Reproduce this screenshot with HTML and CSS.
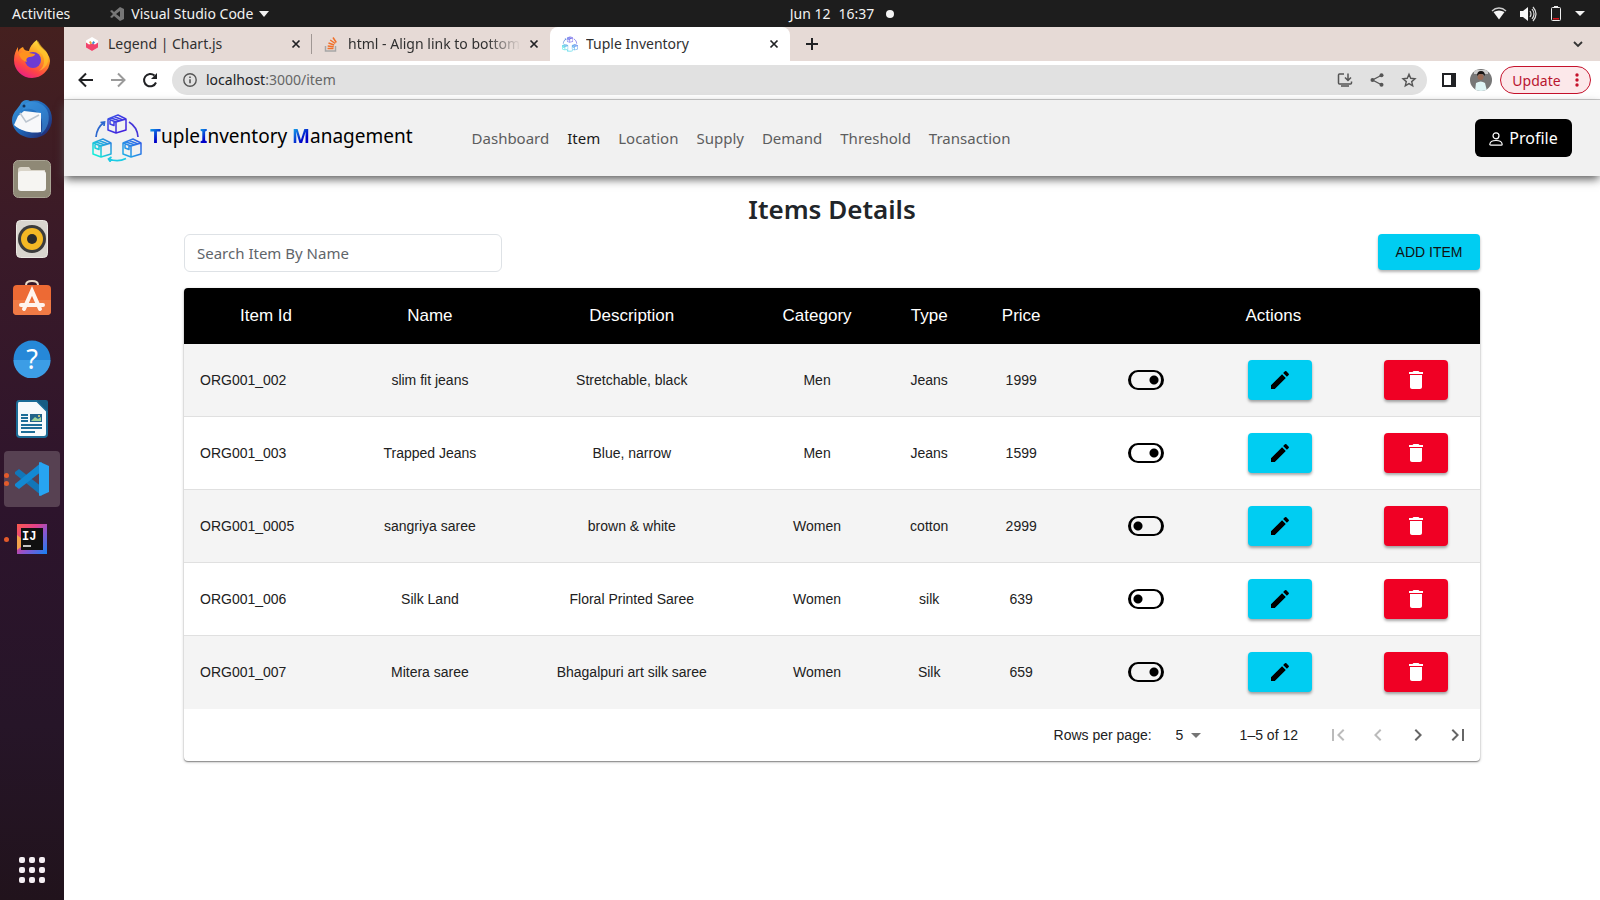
FILE: index.html
```html
<!DOCTYPE html>
<html lang="en">
<head>
<meta charset="utf-8">
<title>Tuple Inventory</title>
<link rel="stylesheet" href="styles.css">
</head>
<body>
<svg class="defs" aria-hidden="true">
  <defs>
    <linearGradient id="boxTop" x1="0" y1="0" x2="1" y2="1"><stop offset="0" stop-color="#3a55e8"/><stop offset="1" stop-color="#4318dc"/></linearGradient>
    <linearGradient id="boxLeft" x1="0" y1="1" x2="1" y2="0"><stop offset="0" stop-color="#0ffbd8"/><stop offset="1" stop-color="#2e78e0"/></linearGradient>
    <linearGradient id="boxRight" x1="0" y1="1" x2="1" y2="0"><stop offset="0" stop-color="#1fb4e6"/><stop offset="1" stop-color="#3357e6"/></linearGradient>
    <linearGradient id="ffA" x1=".8" y1="0" x2=".3" y2="1"><stop offset="0" stop-color="#fff14a"/><stop offset=".4" stop-color="#ff9a1f"/><stop offset=".75" stop-color="#ff4545"/><stop offset="1" stop-color="#e91e86"/></linearGradient>
    <linearGradient id="tbA" x1="0" y1="0" x2="1" y2="1"><stop offset="0" stop-color="#3d9be0"/><stop offset=".5" stop-color="#1f67b8"/><stop offset="1" stop-color="#231c63"/></linearGradient>
    <linearGradient id="ijA" x1="0" y1="0" x2="1" y2="1"><stop offset="0" stop-color="#fb5a4a"/><stop offset=".35" stop-color="#e2408c"/><stop offset=".6" stop-color="#8a55d0"/><stop offset="1" stop-color="#1383f5"/></linearGradient>
    <symbol id="pen" viewBox="0 0 24 24"><path d="M3 17.25V21h3.75L17.81 9.94l-3.75-3.75zM20.71 7.04c.39-.39.39-1.02 0-1.41l-2.34-2.34a.996.996 0 0 0-1.41 0l-1.83 1.83 3.75 3.75z"/></symbol>
    <symbol id="bin" viewBox="0 0 24 24"><path d="M6 19c0 1.100.9 2 2 2h8c1.100 0 2-.9 2-2V7H6zM19 4h-3.500l-1-1h-5l-1 1H5v2h14z"/></symbol>
    <symbol id="close" viewBox="0 0 10 10"><path d="M1.500 1.500l7 7M8.500 1.500l-7 7" fill="none" stroke="#202124" stroke-width="1.700"/></symbol>
    <symbol id="cube" viewBox="0 0 20 20"><path d="M1 5l8 3v11l-8-3zM9 8l10-3v11L9 19M1 5l10-4 8 4M4 4l9 3M7 2.500l9 3.500M3 6v4l4 1.500v-4" fill="none" stroke-width="1.500" stroke-linejoin="round"/></symbol>
    <symbol id="logo" viewBox="0 0 50 48">
      <use href="#cube" x="15" y="0" width="20" height="20" stroke="url(#boxTop)"/>
      <use href="#cube" x="0" y="24" width="20" height="20" stroke="url(#boxLeft)"/>
      <use href="#cube" x="30" y="24" width="20" height="20" stroke="url(#boxRight)"/>
      <g fill="none" stroke-width="1.700"><path d="M4 23C4.500 17 7 12 12 8.500M8.500 8.500l4-.5-.5 4" stroke="#2c68cf"/><path d="M37 8c5 3 8.500 8 9 15" stroke="#4536d8"/><path d="M34 44.500c-5 2.500-11 3-17 .5M19.500 43l-3 2 2 3" stroke="#1bcbe4"/></g>
    </symbol>
    <symbol id="vs" viewBox="0 0 36 36"><path d="M1 11l4-3 23 18v9L1 13z" fill="#1276b8"/><path d="M1 25l4 3 23-18V1L1 23z" fill="#1389d2"/><path d="M26 1l9 4v26l-9 4c-1 0-1-1-1-1V2s0-1 1-1z" fill="#27a4f2"/></symbol>
  </defs>
</svg>

<header class="topbar">
  <div class="topbar-left">
    <span class="activities">Activities</span>
    <svg width="15" height="14" viewBox="0 0 15 14"><path d="M10 0l4 2v10l-4 2-6-5-2 2-2-1 3-3-3-3 2-1 2 2zM10 4L6 7l4 3z" fill="#777"/></svg>
    <span>Visual Studio Code</span>
    <svg width="10" height="6" viewBox="0 0 10 6"><path d="M0 0h10L5 6z" fill="#f2f2f2"/></svg>
  </div>
  <div class="clock"><span>Jun 12</span><span>16:37</span><i class="clock-dot"></i></div>
  <div class="topbar-right">
    <svg width="16" height="13" viewBox="0 0 16 13"><path d="M1 4C5 0 11 0 15 4" fill="none" stroke="#ccc" stroke-width="1.300"/><path d="M2.500 5C6 3 10 3 13.500 5L8 12.500z" fill="#f5f5f5"/></svg>
    <svg width="17" height="16" viewBox="0 0 17 16"><path d="M0 5h3l5-4v14l-5-4H0z" fill="#f5f5f5"/><path d="M10 5q2 3 0 6M12 3q4 5 0 10M13 1q6 7 0 14" fill="none" stroke="#ddd" stroke-width="1.200"/></svg>
    <svg width="12" height="16" viewBox="0 0 12 16"><path d="M4 0h4v2H4z" fill="#eee"/><rect x="1.500" y="1.500" width="9" height="13" rx="1" fill="none" stroke="#eee"/><path d="M3 12h6v1.500H3z" fill="#d4141b"/></svg>
    <svg width="10" height="5" viewBox="0 0 10 5"><path d="M0 0h10L5 5z" fill="#f2f2f2"/></svg>
  </div>
</header>

<div class="desktop">
  <aside class="dock">
    <button class="dock-item" aria-label="Firefox"><svg width="38" height="40" viewBox="0 0 38 40"><path d="M19 39A18 18 0 0 1 1 21C1 15 3 11 5 8v5c1-3 3-4 5-5 1 3 3 4 6 4 1-5 5-9 8-11 1 4 3 6 6 9 4 3 7 8 7 12a18 18 0 0 1-18 17z" fill="url(#ffA)"/><circle cx="20" cy="21" r="8" fill="#6e3bd2"/><path d="M6 15c3-3 7-2 10-1l6 1c0 2-3 3-6 3-3 1-3 3-2 5-4-1-7-4-8-8z" fill="#ff921e"/><path d="M25 12c8 4 8 15 1 20 9-3 12-13 7-20-3-3-6-6-8-10-2 4-2 7 0 10z" fill="#ffc62c" opacity=".65"/></svg></button>
    <button class="dock-item" aria-label="Thunderbird"><svg width="40" height="40" viewBox="0 0 40 40"><path d="M8 6C10 1 15 0 18 2c12-3 22 6 22 18 0 11-8 19-19 19C9 39 0 31 0 21c0-4 2-8 5-11z" fill="url(#tbA)"/><path d="M14 4c8-3 17 0 21 7 4 8 1 19-6 24 2-8 2-16-3-21-5-5-11-5-16-3z" fill="#3c95df" opacity=".6"/><path d="M6 17l6-5 17 2v19c-10 2-20-1-27-7z" fill="#f7f8fa"/><path d="M8 14l6 9 13-7" fill="none" stroke="#bcc5cf" stroke-width="1.500"/><circle cx="12" cy="7" r="1.500" fill="#12335c"/></svg></button>
    <button class="dock-item" aria-label="Files"><svg width="38" height="38" viewBox="0 0 38 38"><rect x=".5" y=".5" width="37" height="37" rx="5" fill="#8f8976" stroke="#aaa595"/><path d="M5 10q0-3 3-3h8l2 3h14v5H5z" fill="#d9d4c8"/><rect x="5" y="11" width="28" height="20" rx="3" fill="#f6f5f2"/></svg></button>
    <button class="dock-item" aria-label="Rhythmbox"><svg width="32" height="38" viewBox="0 0 32 38"><rect x=".5" y=".5" width="31" height="37" rx="4" fill="#d9d5ce" stroke="#ebe8e3"/><circle cx="16" cy="19" r="14" fill="#3c3c3c"/><circle cx="16" cy="19" r="11" fill="#f4b824"/><circle cx="16" cy="19" r="5" fill="#2b2b2b"/></svg></button>
    <button class="dock-item" aria-label="Software"><svg width="38" height="40" viewBox="0 0 38 40"><path d="M13 8V6q0-4 6-4t6 4v2" fill="none" stroke="#eadcc9" stroke-width="2"/><rect x="0" y="6" width="38" height="30" rx="4" fill="#ed6a34"/><path d="M0 21h38v11q0 4-4 4H4q-4 0-4-4z" fill="#f07a45"/><path d="M11 30l8-18 8 18M8 26h22" fill="none" stroke="#fff5ef" stroke-width="4" stroke-linecap="round"/></svg></button>
    <button class="dock-item" aria-label="Help"><svg width="38" height="38" viewBox="0 0 38 38"><circle cx="19" cy="19" r="18.500" fill="#2688d8"/><path d="M.5 20h37a18.500 18.500 0 0 1-37 0z" fill="#3c9de6"/><text x="19" y="29" class="help-mark">?</text></svg></button>
    <button class="dock-item" aria-label="Writer"><svg width="32" height="38" viewBox="0 0 32 38"><path d="M3 1h18l10 10v23q0 3-3 3H4q-3 0-3-3V4q0-3 2-3z" fill="#f7fafc" stroke="#1b6c97" stroke-width="2"/><path d="M21 0h9q2 0 2 2v9z" fill="#185d84"/><path d="M5 15h7M5 18h7M5 21h7M5 25h21M5 28h21M5 32h14" stroke="#1e6e98" stroke-width="1.800"/><rect x="14" y="14" width="12" height="8" fill="#22648a"/><path d="M15 21l4-4 3 2 3-2v4z" fill="#9ed39a"/><circle cx="23" cy="16" r="1" fill="#f4dc7c"/></svg></button>
    <button class="dock-item dock-active" aria-label="Visual Studio Code"><span class="pips"><i></i><i></i></span><svg width="36" height="36"><use href="#vs"/></svg></button>
    <button class="dock-item" aria-label="IntelliJ IDEA"><span class="pips"><i></i></span><svg width="30" height="30" viewBox="0 0 30 30"><rect width="30" height="30" fill="url(#ijA)"/><path d="M0 11l4 3v9l-4 3z" fill="#f3a24c"/><rect x="4" y="4" width="22" height="22" fill="#101010"/><text x="5" y="16" class="ij-mark">IJ</text><path d="M6 22h8" stroke="#fff" stroke-width="1.500"/></svg></button>
    <button class="dock-item dock-apps" aria-label="Show applications"><svg width="26" height="26" viewBox="0 0 26 26" fill="#f4eef2"><g id="dots"><rect width="6" height="6" rx="2"/><rect x="10" width="6" height="6" rx="2"/><rect x="20" width="6" height="6" rx="2"/></g><use href="#dots" y="10"/><use href="#dots" y="20"/></svg></button>
  </aside>

  <div class="browser">
    <div class="tabs">
      <div class="tab"><svg width="16" height="16" viewBox="0 0 16 16"><path d="M8 1l6 3.500v7L8 15l-6-3.500v-7z" fill="#fff"/><path d="M2 6.500l3 2 3-1 3 1 3-2v5L8 15l-6-3.500z" fill="#f2446c"/><path d="M5 6l1.500-1L8 7 6.500 8.500z" fill="#e7a53a"/><path d="M8 7l1.500-2L11 6.500 9 8.500z" fill="#3a8ccf"/></svg><span class="tab-title">Legend | Chart.js</span><button class="tab-close" aria-label="Close tab"><svg width="10" height="10"><use href="#close"/></svg></button></div>
      <div class="tab tab-split"><svg width="16" height="16" viewBox="0 0 16 16" fill="none"><path d="M1.500 10v5h10v-5" stroke="#a6a6a6" stroke-width="1.500"/><path d="M3.500 12.500h6M3.700 10l6 .8M4.500 7l5.700 2M6.200 4l5 3.500M9 1.500l3.300 5" stroke="#f0702a" stroke-width="1.500"/></svg><span class="tab-title tab-fade">html - Align link to bottom</span><button class="tab-close" aria-label="Close tab"><svg width="10" height="10"><use href="#close"/></svg></button></div>
      <div class="tab tab-current"><svg width="16" height="16"><use href="#logo"/></svg><span class="tab-title">Tuple Inventory</span><button class="tab-close" aria-label="Close tab"><svg width="10" height="10"><use href="#close"/></svg></button></div>
      <button class="tab-new" aria-label="New tab"><svg width="12" height="12" viewBox="0 0 12 12"><path d="M6 0v12M0 6h12" stroke="#202124" stroke-width="2"/></svg></button>
      <button class="tab-list" aria-label="Search tabs"><svg width="10" height="7" viewBox="0 0 10 7"><path d="M1 1l4 4 4-4" fill="none" stroke="#333" stroke-width="1.800"/></svg></button>
    </div>

    <div class="toolbar">
      <button class="tool" aria-label="Back"><svg width="16" height="16" viewBox="0 0 16 16"><path d="M15 8H2M8 1.500L1.500 8 8 14.500" fill="none" stroke="#202124" stroke-width="2"/></svg></button>
      <button class="tool" aria-label="Forward"><svg width="16" height="16" viewBox="0 0 16 16"><path d="M1 8h13M8 1.500L14.500 8 8 14.500" fill="none" stroke="#9a9a9a" stroke-width="2"/></svg></button>
      <button class="tool" aria-label="Reload"><svg width="16" height="16" viewBox="0 0 16 16"><path d="M14 10.500A6.200 6.200 0 1 1 12.500 3.600" fill="none" stroke="#202124" stroke-width="2"/><path d="M15 1v6H9z" fill="#202124"/></svg></button>
      <div class="omnibox">
        <svg width="14" height="14" viewBox="0 0 14 14"><circle cx="7" cy="7" r="6.200" fill="none" stroke="#555" stroke-width="1.400"/><path d="M7 6.200v4M7 3.400v1.500" stroke="#555" stroke-width="1.600"/></svg>
        <a class="url" href="#"><b>localhost</b>:3000/item</a>
        <svg width="16" height="16" viewBox="0 0 16 16"><path d="M7 2H2.500q-1 0-1 1v8q0 1 1 1h11q1 0 1-1V9.500M4 14h8" fill="none" stroke="#555" stroke-width="1.500"/><path d="M11 1.500v6.500M8 5.500l3 3 3-3" fill="none" stroke="#555" stroke-width="1.500"/></svg>
        <svg width="16" height="16" viewBox="0 0 16 16"><path d="M12.500 3.200L3.500 8l9 4.800" fill="none" stroke="#555" stroke-width="1.300"/><g fill="#555"><circle cx="12.500" cy="3.200" r="2"/><circle cx="3.500" cy="8" r="2"/><circle cx="12.500" cy="12.800" r="2"/></g></svg>
        <svg width="16" height="16" viewBox="0 0 16 16"><path d="M8 2.300l1.700 4 4.300.4-3.300 2.900 1 4.200L8 11.600l-3.700 2.200 1-4.200L2 6.700l4.300-.4z" fill="none" stroke="#555" stroke-width="1.400"/></svg>
      </div>
      <button class="tool side" aria-label="Side panel"><svg width="14" height="14" viewBox="0 0 14 14"><path d="M0 0h14v14H0zM2 2v10h7V2z" fill="#202124" fill-rule="evenodd"/></svg></button>
      <button class="tool" aria-label="Profile"><svg width="22" height="22" viewBox="0 0 22 22"><clipPath id="av"><circle cx="11" cy="11" r="11"/></clipPath><g clip-path="url(#av)"><rect width="22" height="22" fill="#777"/><path d="M4 1h14v4H4z" fill="#ccc"/><path d="M5 22l1-8q5-3 9 0l2 8z" fill="#dff5f6"/><circle cx="10.500" cy="8" r="3" fill="#9a6a55"/><path d="M7 7q0-5 4-5t4 5l-2-2H9z" fill="#171313"/></g></svg></button>
      <button class="update">Update<svg width="4" height="14" viewBox="0 0 4 14" fill="#c5122c"><circle cx="2" cy="2" r="1.700"/><circle cx="2" cy="7" r="1.700"/><circle cx="2" cy="12" r="1.700"/></svg></button>
    </div>

    <nav class="navbar">
      <a class="brand" href="#"><svg width="50" height="48"><use href="#logo"/></svg><span><b>T</b>uple<b>I</b>nventory <b>M</b>anagement</span></a>
      <div class="links">
        <a href="#">Dashboard</a><a class="current" href="#">Item</a><a href="#">Location</a><a href="#">Supply</a><a href="#">Demand</a><a href="#">Threshold</a><a href="#">Transaction</a>
      </div>
      <button class="profile"><svg width="14" height="16" viewBox="0 0 14 16" fill="none" stroke="#fff" stroke-width="1.200"><circle cx="7" cy="5.800" r="3"/><path d="M.8 14.200q.4-3.700 6.200-3.700t6.200 3.700q0 1-1 1H1.800q-1 0-1-1z"/></svg>Profile</button>
    </nav>

    <main class="content">
      <h1>Items Details</h1>
      <div class="actions">
        <input class="search" type="text" placeholder="Search Item By Name" aria-label="Search Item By Name">
        <button class="add">ADD ITEM</button>
      </div>
      <div class="paper">
        <table>
          <colgroup><col class="c-id"><col class="c-name"><col class="c-desc"><col class="c-cat"><col class="c-type"><col class="c-price"><col class="c-toggle"><col class="c-edit"><col class="c-del"></colgroup>
          <thead><tr><th>Item Id</th><th>Name</th><th>Description</th><th>Category</th><th>Type</th><th>Price</th><th colspan="3">Actions</th></tr></thead>
          <tbody>
            <tr><td>ORG001_002</td><td>slim fit jeans</td><td>Stretchable, black</td><td>Men</td><td>Jeans</td><td>1999</td><td><input class="toggle" type="checkbox" aria-label="Active" checked></td><td><button class="edit" aria-label="Edit"><svg width="24" height="24"><use href="#pen"/></svg></button></td><td><button class="delete" aria-label="Delete"><svg width="24" height="24"><use href="#bin"/></svg></button></td></tr>
            <tr><td>ORG001_003</td><td>Trapped Jeans</td><td>Blue, narrow</td><td>Men</td><td>Jeans</td><td>1599</td><td><input class="toggle" type="checkbox" aria-label="Active" checked></td><td><button class="edit" aria-label="Edit"><svg width="24" height="24"><use href="#pen"/></svg></button></td><td><button class="delete" aria-label="Delete"><svg width="24" height="24"><use href="#bin"/></svg></button></td></tr>
            <tr><td>ORG001_0005</td><td>sangriya saree</td><td>brown &amp; white</td><td>Women</td><td>cotton</td><td>2999</td><td><input class="toggle" type="checkbox" aria-label="Active"></td><td><button class="edit" aria-label="Edit"><svg width="24" height="24"><use href="#pen"/></svg></button></td><td><button class="delete" aria-label="Delete"><svg width="24" height="24"><use href="#bin"/></svg></button></td></tr>
            <tr><td>ORG001_006</td><td>Silk Land</td><td>Floral Printed Saree</td><td>Women</td><td>silk</td><td>639</td><td><input class="toggle" type="checkbox" aria-label="Active"></td><td><button class="edit" aria-label="Edit"><svg width="24" height="24"><use href="#pen"/></svg></button></td><td><button class="delete" aria-label="Delete"><svg width="24" height="24"><use href="#bin"/></svg></button></td></tr>
            <tr><td>ORG001_007</td><td>Mitera saree</td><td>Bhagalpuri art silk saree</td><td>Women</td><td>Silk</td><td>659</td><td><input class="toggle" type="checkbox" aria-label="Active" checked></td><td><button class="edit" aria-label="Edit"><svg width="24" height="24"><use href="#pen"/></svg></button></td><td><button class="delete" aria-label="Delete"><svg width="24" height="24"><use href="#bin"/></svg></button></td></tr>
          </tbody>
        </table>
        <div class="pager">
          <label for="rows">Rows per page:</label>
          <span class="rows"><select id="rows"><option>5</option><option>10</option></select><svg width="10" height="5" viewBox="0 0 10 5"><path d="M0 0h10L5 5z" fill="#757575"/></svg></span>
          <span class="range">1–5 of 12</span>
          <button disabled aria-label="First page"><svg width="24" height="24" viewBox="0 0 24 24"><path d="M18.410 16.590L13.820 12l4.590-4.590L17 6l-6 6 6 6zM6 6h2v12H6z"/></svg></button>
          <button disabled aria-label="Previous page"><svg width="24" height="24" viewBox="0 0 24 24"><path d="M15.410 16.590L10.830 12l4.580-4.590L14 6l-6 6 6 6z"/></svg></button>
          <button aria-label="Next page"><svg width="24" height="24" viewBox="0 0 24 24"><path d="M8.590 16.590L13.170 12 8.590 7.410 10 6l6 6-6 6z"/></svg></button>
          <button aria-label="Last page"><svg width="24" height="24" viewBox="0 0 24 24"><path d="M5.590 7.410L10.180 12l-4.590 4.590L7 18l6-6-6-6zM16 6h2v12h-2z"/></svg></button>
        </div>
      </div>
    </main>
  </div>
</div>
</body>
</html>
```
FILE: styles.css
```css
* { box-sizing: border-box; }
body {
  margin: 0;
  min-height: 100vh;
  display: flex;
  flex-direction: column;
  font-family: "Noto Sans", sans-serif;
  color: #212529;
  background: #fff;
}
button { border: 0; padding: 0; background: none; font: inherit; color: inherit; display: flex; align-items: center; justify-content: center; }
a { color: inherit; text-decoration: none; }
svg { display: block; flex: none; }
.defs { position: absolute; width: 0; height: 0; }

.topbar {
  height: 27px;
  padding: 0 15px 0 12px;
  display: grid;
  grid-template-columns: 11fr auto 10fr;
  align-items: center;
  background: #1d1d1d;
  color: #f2f2f2;
  font-size: 14px;
}
.topbar-left, .topbar-right { display: flex; align-items: center; gap: 6px; }
.activities { margin-right: 34px; }
.topbar-right { justify-content: flex-end; gap: 13px; }
.clock { display: flex; align-items: center; gap: 8px; padding-left: 18px; }
.clock-dot { width: 8px; height: 8px; border-radius: 50%; background: #f5f5f5; margin-left: 4px; }

.desktop { flex: 1; display: flex; }
.dock {
  width: 64px;
  flex: none;
  display: flex;
  flex-direction: column;
  align-items: center;
  gap: 4px;
  padding: 4px 4px 2px;
  background: linear-gradient(#45201f, #3a1a28 25%, #2d142c 55%, #261528 80%, #21131c);
}
.dock-item { position: relative; width: 56px; height: 56px; border-radius: 4px; }
.dock-active { background: #574152; }
.dock-apps { margin-top: auto; }
.pips { position: absolute; left: 0; top: 0; height: 100%; display: flex; flex-direction: column; justify-content: center; gap: 3px; }
.pips i { width: 5px; height: 5px; border-radius: 50%; background: #e35a2b; }
.help-mark { font: 27px "Noto Sans", sans-serif; fill: #fff; text-anchor: middle; }
.ij-mark { font: bold 12px "Liberation Mono", monospace; fill: #fff; }

.browser { flex: 1; min-width: 0; display: flex; flex-direction: column; }
.tabs { height: 34px; display: flex; background: #e6dad6; font-size: 14px; }
.tab { width: 240px; padding: 0 11px 0 12px; display: flex; align-items: center; gap: 8px; }
.tabs .tab:first-child { width: 247px; padding: 0 10px 0 20px; }
.tab-split { width: 239px; padding-left: 13px; background: linear-gradient(#a09794, #a09794) 0 50% / 1px 20px no-repeat; }
.tab-title { flex: 1; min-width: 0; overflow: hidden; white-space: nowrap; color: #303030; padding-bottom: 1px; }
.tab-fade { mask-image: linear-gradient(90deg, #000 80%, transparent); }
.tab-current { background: #fff; border-radius: 8px 8px 0 0; }
.tab-new { width: 43px; }
.tab-list { margin-left: auto; width: 44px; }

.toolbar { height: 39px; display: flex; align-items: center; padding: 0 9px 0 14px; gap: 16px; border-bottom: 1px solid #c9c9c9; font-size: 14px; }
.omnibox { flex: 1; height: 30px; margin-left: -2px; padding: 0 10px 0 11px; border-radius: 15px; background: #e1e1e1; display: flex; align-items: center; gap: 16px; }
.url { flex: 1; margin-left: -7px; padding-bottom: 1px; color: #666; }
.url b { font-weight: 400; color: #202124; }
.side { margin: 0 -2px 0 -1px; }
.update { width: 91px; height: 28px; margin-left: -8px; gap: 14px; border: 1px solid #c5122c; border-radius: 14px; background: #fce8ea; color: #b81530; }

.navbar {
  position: relative;
  min-height: 76px;
  padding: 0 28px;
  display: flex;
  align-items: center;
  background: #f1f1f1;
  box-shadow: 0 4px 9px -1px #555;
  font-size: 15px;
}
.brand { display: flex; align-items: center; gap: 8px; font-size: 19px; color: #000; margin-right: 59px; }
.brand span { padding-bottom: 4px; }
.brand b { background: linear-gradient(135deg, #16b8ee 10%, #0000c8 65%); background-clip: text; color: transparent; }
.links { flex: 1; display: flex; gap: 18px; color: #5c5d5e; }
.links .current { color: #1a1a1a; }
.profile { width: 97px; height: 38px; gap: 6px; border-radius: 6px; background: #000; color: #fff; font-size: 16px; }

.content { width: 100%; max-width: 1320px; margin: 0 auto; padding: 16px 12px; }
h1 { margin: 0 0 8px; font-size: 26px; line-height: 34px; font-weight: 600; text-align: center; }
.actions { display: flex; justify-content: space-between; align-items: flex-start; margin-bottom: 16px; }
.search { width: 318px; height: 38px; padding: 0 12px; border: 1px solid #dee2e6; border-radius: 6px; font: 15px "Noto Sans", sans-serif; }
.search::placeholder { color: #5f656a; opacity: 1; }
.add { width: 102px; height: 36px; border-radius: 4px; background: #00cdf2; color: #111; font: 14px "Liberation Sans", sans-serif; box-shadow: 0 2px 3px rgba(0,0,0,.3); }

.paper { border-radius: 4px; overflow: hidden; box-shadow: 0 1px 3px rgba(0,0,0,.3), 0 1px 1px rgba(0,0,0,.3); font: 14px/20px "Liberation Sans", sans-serif; color: #212121; }
table { width: 100%; table-layout: fixed; border-collapse: separate; border-spacing: 0; }
.c-id, .c-name { width: 12.65%; }
.c-desc { width: 18.5%; }
.c-cat { width: 10.1%; }
.c-type { width: 7.2%; }
.c-price { width: 7%; }
.c-toggle { width: 10.9%; }
.c-edit { width: 11.1%; }
.c-del { width: 9.9%; }
th { height: 56px; padding: 0; background: #000; color: #fff; font-size: 17px; font-weight: 400; }
td { height: 73px; padding: 0; border-bottom: 1px solid #e0e0e0; text-align: center; }
td:first-child { text-align: left; padding-left: 16px; }
td:nth-child(7) { padding-left: 18px; }
tbody tr:nth-child(odd) { background: #f4f4f4; }
tbody tr:last-child td { border-bottom-color: #f4f4f4; }
.edit, .delete { width: 64px; height: 40px; margin: 0 auto; border-radius: 4px; background: #00cdf2; fill: #000; box-shadow: 0 2px 3px rgba(0,0,0,.35); }
.delete { background: #f00024; fill: #fff; }
.toggle { appearance: none; display: block; width: 36px; height: 20px; margin: 0 auto; border: 2px solid #000; border-width: 2px 3px; border-radius: 10px; background: radial-gradient(circle at 7px 8px, #000 4px, transparent 5px); }
.toggle:checked { background: radial-gradient(circle at 23px 8px, #000 4px, transparent 5px); }

.pager { height: 52px; padding-right: 2px; display: flex; align-items: center; justify-content: flex-end; }
.rows { position: relative; margin: 0 32px 0 16px; }
.rows select { appearance: none; width: 40px; height: 24px; padding: 0 8px; border: 0; background: none; font: inherit; color: inherit; }
.rows svg { position: absolute; right: 7px; top: 10px; pointer-events: none; }
.range { margin-right: 20px; }
.pager button { width: 40px; height: 40px; fill: #666; }
.pager button:disabled { fill: #bbb; }
```
